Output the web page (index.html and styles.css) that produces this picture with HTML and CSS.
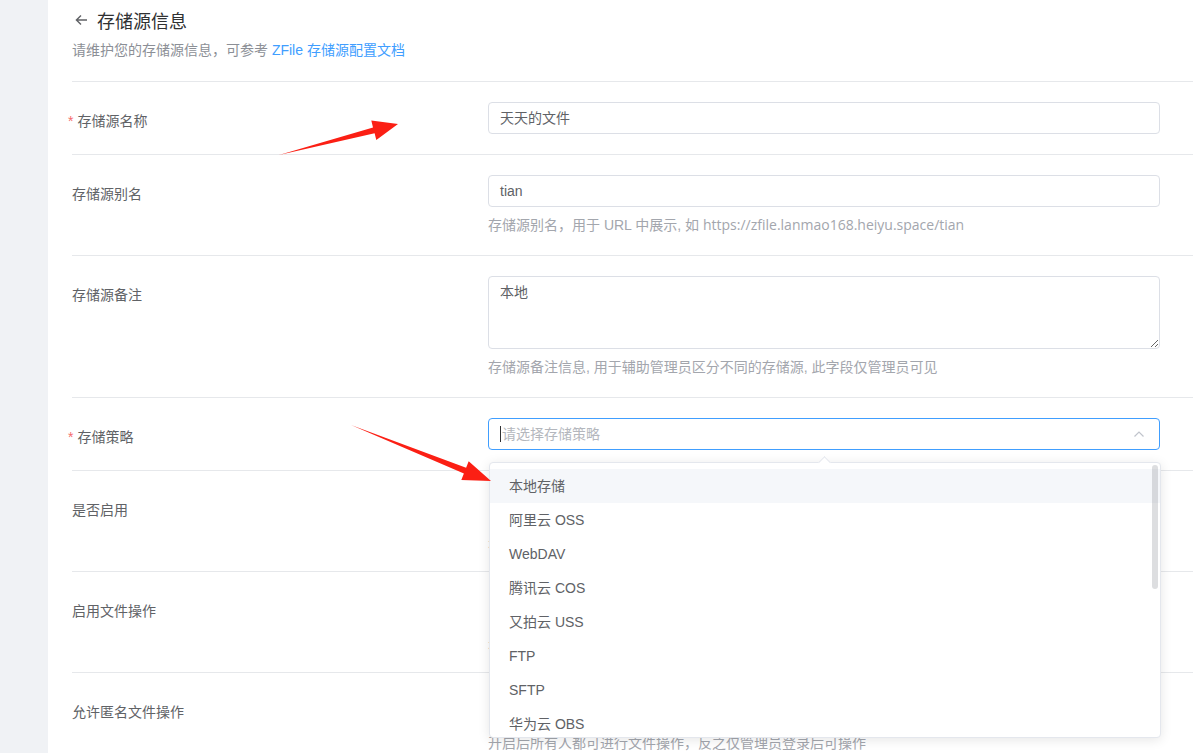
FILE: index.html
```html
<!DOCTYPE html>
<html lang="zh-CN">
<head>
<meta charset="utf-8">
<title>存储源信息</title>
<link rel="stylesheet" href="styles.css">
</head>
<body>
<div class="layout">
  <aside class="side"></aside>
  <main class="panel">
    <header class="head">
      <h1 class="title">
        <svg class="back" width="13" height="12" viewBox="0 0 13 12"><path d="M12 6H1.6M6 1.5L1.4 6 6 10.5" fill="none" stroke="#606266" stroke-width="1.4"/></svg>
        <span>存储源信息</span>
      </h1>
      <p class="sub">请维护您的存储源信息，可参考 <a class="link">ZFile 存储源配置文档</a></p>
    </header>

    <div class="row">
      <label class="lbl"><span class="req">*</span>存储源名称</label>
      <div class="ctl"><div class="input">天天的文件</div></div>
    </div>

    <div class="row">
      <label class="lbl">存储源别名</label>
      <div class="ctl">
        <div class="input">tian</div>
        <div class="help">存储源别名，用于 URL 中展示, 如 <span class="url">https://zfile.lanmao168.heiyu.space/tian</span></div>
      </div>
    </div>

    <div class="row">
      <label class="lbl">存储源备注</label>
      <div class="ctl">
        <textarea class="area">本地</textarea>
        <div class="help">存储源备注信息, 用于辅助管理员区分不同的存储源, 此字段仅管理员可见</div>
      </div>
    </div>

    <div class="row">
      <label class="lbl"><span class="req">*</span>存储策略</label>
      <div class="ctl">
        <div class="select">
          <div class="input focus"><span class="cursor"></span><span class="ph">请选择存储策略</span>
            <svg class="chev" width="12" height="8" viewBox="0 0 12 8"><path d="M1.5 6.5L6 2l4.5 4.5" fill="none" stroke="#c0c4cc" stroke-width="1.2"/></svg>
          </div>
          <div class="drop">
            <span class="caret"></span>
            <ul class="opts">
              <li class="hover">本地存储</li>
              <li>阿里云 OSS</li>
              <li>WebDAV</li>
              <li>腾讯云 COS</li>
              <li>又拍云 USS</li>
              <li>FTP</li>
              <li>SFTP</li>
              <li>华为云 OBS</li>
              <li>七牛云 KODO</li>
              <li>MINIO</li>
              <li>S3 通用协议</li>
              <li>OneDrive</li>
            </ul>
            <span class="thumb"></span>
          </div>
        </div>
      </div>
    </div>

    <div class="row">
      <label class="lbl">是否启用</label>
      <div class="ctl">
        <div class="line"></div>
        <div class="help">是否启用该存储源</div>
      </div>
    </div>

    <div class="row">
      <label class="lbl">启用文件操作</label>
      <div class="ctl">
        <div class="line"></div>
        <div class="help">是否启用文件上传，编辑，删除等操作</div>
      </div>
    </div>

    <div class="row">
      <label class="lbl">允许匿名文件操作</label>
      <div class="ctl">
        <div class="line"></div>
        <div class="help">开启后所有人都可进行文件操作，反之仅管理员登录后可操作</div>
      </div>
    </div>
  </main>
</div>
<svg class="marks" width="1193" height="753" viewBox="0 0 1193 753">
  <polygon points="279,155 373,127.4 371.3,120.6 398,124 376.3,140 374.6,133.2" fill="#fb1f14"/>
  <polygon points="351,425 466.1,467.8 468.7,461.3 491,481 461.3,479.9 463.9,473.4" fill="#fb1f14"/>
</svg>
</body>
</html>
```

FILE: styles.css
```css
* { box-sizing: border-box; }
html, body { margin: 0; padding: 0; }
body {
  width: 1193px;
  height: 753px;
  overflow: hidden;
  background: #f0f2f5;
  font-family: "Liberation Sans", "Noto Sans CJK SC", sans-serif;
  font-size: 14px;
  color: #606266;
  position: relative;
}
.layout { display: flex; height: 753px; }
.side { width: 48px; flex: none; background: #f0f2f5; }
.panel { flex: 1; background: #fff; padding: 8px 0 0 24px; }

.head { padding-bottom: 21px; border-bottom: 1px solid #e6e8eb; }
.title {
  margin: 0;
  display: flex;
  align-items: center;
  gap: 9px;
  height: 24px;
  font-size: 18px;
  font-weight: normal;
  color: #303133;
  padding-left: 3px;
}
.back { flex: none; }
.sub {
  margin: 8px 0 0;
  line-height: 20px;
  font-size: 14px;
  color: #8c8f96;
}
.link { color: #409eff; }

.row {
  display: grid;
  grid-template-columns: 416px 672px;
  align-items: start;
  padding: 20px 0;
  border-bottom: 1px solid #e6e8eb;
}
.lbl {
  line-height: 32px;
  padding-top: 3px;
  margin-bottom: -3px;
  color: #606266;
}
.req { color: #f56c6c; margin-left: -4px; margin-right: 4px; }
.ctl { display: flex; flex-direction: column; gap: 8px; }
.input {
  height: 32px;
  line-height: 30px;
  border: 1px solid #dcdfe6;
  border-radius: 4px;
  padding: 0 11px;
  color: #606266;
  display: flex;
  align-items: center;
}
.area {
  display: block;
  height: 73px;
  width: 100%;
  border: 1px solid #dcdfe6;
  border-radius: 4px;
  padding: 5px 11px;
  font: inherit;
  line-height: 21px;
  color: #606266;
  resize: vertical;
  outline: none;
}
.help { line-height: 20px; color: #a3a6ad; }
.url { font-family: "Open Sans", "Liberation Sans", sans-serif; }
.line { height: 32px; }

.select { position: relative; }
.input.focus { border-color: #409eff; }
.cursor { width: 1px; height: 16px; background: #303133; margin-right: 1px; }
.ph { color: #b4b7bd; flex: 1; }
.chev { flex: none; margin-right: 3px; }

.drop {
  position: absolute;
  left: 1px;
  top: 44px;
  width: 672px;
  height: 276px;
  background: #fff;
  border: 1px solid #e4e7ed;
  border-radius: 4px;
  box-shadow: 0 2px 12px rgba(0, 0, 0, 0.1);
  z-index: 5;
}
.caret {
  position: absolute;
  top: -5px;
  left: 330px;
  width: 9px;
  height: 9px;
  background: #fff;
  border-left: 1px solid #e4e7ed;
  border-top: 1px solid #e4e7ed;
  transform: rotate(45deg);
}
.opts {
  list-style: none;
  margin: 0;
  padding: 6px 0 0;
  height: 274px;
  overflow: hidden;
}
.opts li {
  height: 34px;
  line-height: 34px;
  padding-left: 19px;
  color: #606266;
}
.opts li.hover { background: #f5f7fa; }
.thumb {
  position: absolute;
  right: 2px;
  top: 2px;
  width: 6px;
  height: 124px;
  border-radius: 3px;
  background: rgba(144, 147, 153, 0.3);
}

.marks { position: absolute; left: 0; top: 0; pointer-events: none; z-index: 10; }
```
